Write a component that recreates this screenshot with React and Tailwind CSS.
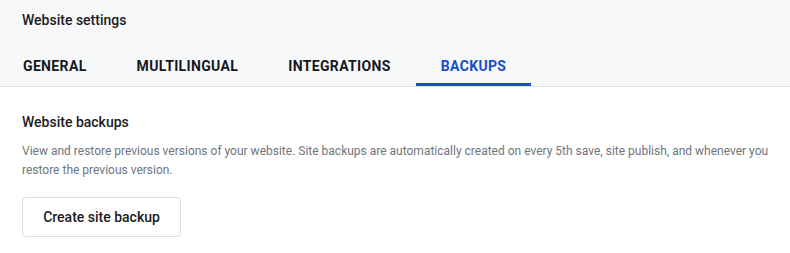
import { useState } from "react";

const TABS = ["General", "Multilingual", "Integrations", "Backups"];

function App() {
  const [active, setActive] = useState("Backups");

  return (
    <div className="min-h-screen bg-white font-['Roboto',sans-serif]">
      {/* header */}
      <div className="rounded-tl-[4px] bg-[#f7f8fa] border-b border-[#dde1e6]">
        <div className="px-[22px] pt-[10px] text-[14px] leading-[20px] font-medium text-[#1b1d21]">
          Website settings
        </div>
        <div className="mt-4 flex -ml-[2px]">
          {TABS.map((tab) => (
            <button
              key={tab}
              onClick={() => setActive(tab)}
              className={
                active === tab
                  ? "h-10 px-[25px] text-[14px] font-bold uppercase tracking-[0.35px] text-[#1a4fc4] border-b-[3px] border-[#1a4fc4] pt-[3px]"
                  : "h-10 px-[25px] text-[14px] font-bold uppercase tracking-[0.35px] text-[#16181c] border-b-[3px] border-transparent pt-[3px]"
              }
            >
              {tab}
            </button>
          ))}
        </div>
      </div>

      {/* content */}
      <div className="pl-[22px] pr-[10px] pt-[25px]">
        <h2 className="text-[14px] leading-[20px] font-medium text-[#1b1d21]">Website backups</h2>
        <p className="mt-[10px] text-[12px] leading-[19px] text-[#70757d]">
          View and restore previous versions of your website. Site backups are automatically created on every 5th save, site publish, and whenever you restore the previous version.
        </p>
        <button className="mt-[17px] h-[40px] w-[159px] rounded-[4px] border border-[#dadde2] bg-white text-[14px] font-medium text-[#1b1d21]">
          Create site backup
        </button>
      </div>
    </div>
  );
}

export default App;
